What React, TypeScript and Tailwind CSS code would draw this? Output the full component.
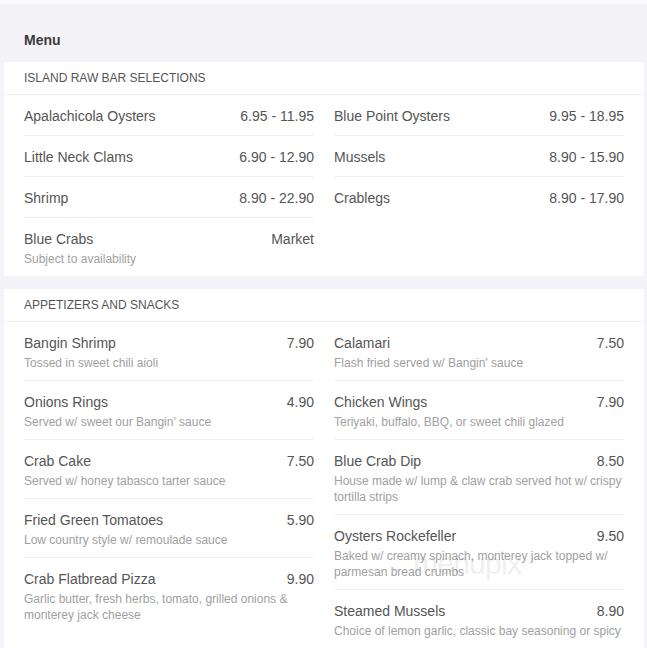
import React from "react";

type Item = { name: string; price: string; desc?: string };

const raw: [Item[], Item[]] = [
  [
    { name: "Apalachicola Oysters", price: "6.95 - 11.95" },
    { name: "Little Neck Clams", price: "6.90 - 12.90" },
    { name: "Shrimp", price: "8.90 - 22.90" },
    { name: "Blue Crabs", price: "Market", desc: "Subject to availability" },
  ],
  [
    { name: "Blue Point Oysters", price: "9.95 - 18.95" },
    { name: "Mussels", price: "8.90 - 15.90" },
    { name: "Crablegs", price: "8.90 - 17.90" },
  ],
];

const apps: [Item[], Item[]] = [
  [
    { name: "Bangin Shrimp", price: "7.90", desc: "Tossed in sweet chili aioli" },
    { name: "Onions Rings", price: "4.90", desc: "Served w/ sweet our Bangin' sauce" },
    { name: "Crab Cake", price: "7.50", desc: "Served w/ honey tabasco tarter sauce" },
    { name: "Fried Green Tomatoes", price: "5.90", desc: "Low country style w/ remoulade sauce" },
    {
      name: "Crab Flatbread Pizza",
      price: "9.90",
      desc: "Garlic butter, fresh herbs, tomato, grilled onions & monterey jack cheese",
    },
  ],
  [
    { name: "Calamari", price: "7.50", desc: "Flash fried served w/ Bangin' sauce" },
    { name: "Chicken Wings", price: "7.90", desc: "Teriyaki, buffalo, BBQ, or sweet chili glazed" },
    {
      name: "Blue Crab Dip",
      price: "8.50",
      desc: "House made w/ lump & claw crab served hot w/ crispy tortilla strips",
    },
    {
      name: "Oysters Rockefeller",
      price: "9.50",
      desc: "Baked w/ creamy spinach, monterey jack topped w/ parmesan bread crumbs",
    },
    { name: "Steamed Mussels", price: "8.90", desc: "Choice of lemon garlic, classic bay seasoning or spicy" },
  ],
];

function Column({ items }: { items: Item[] }) {
  return (
    <div className="flex flex-col">
      {items.map((it, i) => (
        <div
          key={it.name}
          className={
            "pt-[11px] pb-[9px] " + (i < items.length - 1 ? "border-b border-[#efefef]" : "")
          }
        >
          <div className="flex justify-between items-center h-[20px] text-[14px] leading-[20px] text-[#555]">
            <span>{it.name}</span>
            <span>{it.price}</span>
          </div>
          {it.desc && (
            <div className="mt-[2px] text-[12px] leading-[16px] text-[#a0a0a0]">{it.desc}</div>
          )}
        </div>
      ))}
    </div>
  );
}

function Section({ title, cols }: { title: string; cols: [Item[], Item[]] }) {
  return (
    <div className="bg-white">
      <div className="h-[33px] border-b border-[#efefef] px-[20px] flex items-center text-[12px] text-[#555] uppercase">
        {title}
      </div>
      <div className="grid grid-cols-2 gap-x-[20px] px-[20px]">
        <Column items={cols[0]} />
        <Column items={cols[1]} />
      </div>
    </div>
  );
}

export default function App() {
  return (
    <div
      className="min-h-[648px] w-[647px] bg-[#f4f4f8] border-t-[4px] border-[#fafafc] overflow-hidden"
      style={{ fontFamily: '"Liberation Sans", Arial, sans-serif' }}
    >
      <div className="ml-[4px] w-[640px] relative">
        <div className="h-[58px] flex items-end pb-[12px] px-[20px]">
          <span className="text-[14px] leading-[20px] font-bold text-[#3a3a3a]">Menu</span>
        </div>
        <Section title="Island Raw Bar Selections" cols={raw} />
        <div className="h-[13px]" />
        <Section title="Appetizers and Snacks" cols={apps} />
        <div className="absolute left-[409px] top-[542px] text-[30px] leading-[36px] text-[#000] opacity-[0.06] pointer-events-none select-none tracking-tight">
          menupix
        </div>
      </div>
    </div>
  );
}
